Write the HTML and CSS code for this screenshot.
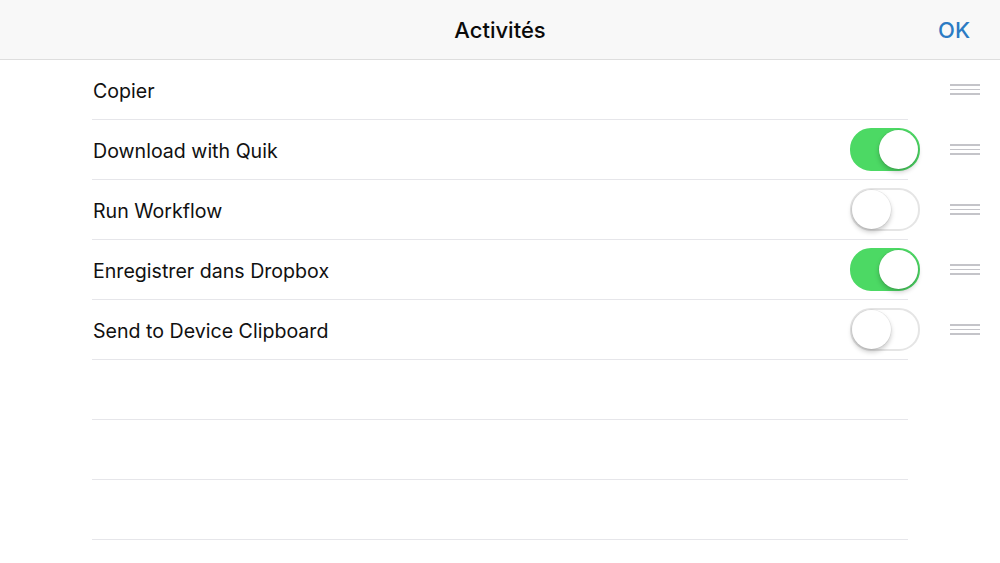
FILE: index.html
```html
<!DOCTYPE html>
<html lang="fr">
<head>
<meta charset="utf-8">
<title>Activités</title>
<link rel="stylesheet" href="styles.css">
</head>
<body>
<header class="navbar">
  <div class="nav-side"></div>
  <h1 class="nav-title">Activités</h1>
  <div class="nav-side nav-right"><button class="nav-btn">OK</button></div>
</header>
<ul class="list">
  <li class="row">
    <div class="cell"><span class="label">Copier</span></div>
    <span class="grip"><i></i><i></i><i></i></span>
  </li>
  <li class="row">
    <div class="cell"><span class="label">Download with Quik</span><span class="switch on"><span class="knob"></span></span></div>
    <span class="grip"><i></i><i></i><i></i></span>
  </li>
  <li class="row">
    <div class="cell"><span class="label">Run Workflow</span><span class="switch"><span class="knob"></span></span></div>
    <span class="grip"><i></i><i></i><i></i></span>
  </li>
  <li class="row">
    <div class="cell"><span class="label">Enregistrer dans Dropbox</span><span class="switch on"><span class="knob"></span></span></div>
    <span class="grip"><i></i><i></i><i></i></span>
  </li>
  <li class="row">
    <div class="cell"><span class="label">Send to Device Clipboard</span><span class="switch"><span class="knob"></span></span></div>
    <span class="grip"><i></i><i></i><i></i></span>
  </li>
  <li class="row empty"><div class="cell"></div></li>
  <li class="row empty"><div class="cell"></div></li>
  <li class="row empty"><div class="cell"></div></li>
</ul>
</body>
</html>
```
FILE: styles.css
```css
html, body {
  margin: 0;
  padding: 0;
  background: #ffffff;
  font-family: "Inter", "Liberation Sans", Arial, sans-serif;
  color: #000;
  height: 563px;
  overflow: hidden;
}

.navbar {
  height: 59px;
  background: #f8f8f8;
  border-bottom: 1px solid #dedede;
  display: flex;
  align-items: center;
  padding: 0 30px;
}

.nav-side {
  flex: 1;
  display: flex;
}

.nav-right {
  justify-content: flex-end;
}

.nav-title {
  margin: 0;
  font-size: 22px;
  font-weight: 500;
  color: #0a0a0a;
}

.nav-btn {
  border: 0;
  background: none;
  padding: 0;
  font-family: "Inter", "Liberation Sans", sans-serif;
  font-size: 22px;
  font-weight: 500;
  color: #2b7bc4;
  margin-top: 1px;
}

.list {
  list-style: none;
  margin: 0;
  padding: 0;
}

.row {
  display: flex;
  align-items: center;
  height: 60px;
  padding-left: 92px;
}

.cell {
  width: 816px;
  height: 59px;
  border-bottom: 1px solid #e6e6ea;
  display: flex;
  align-items: center;
  justify-content: space-between;
  box-sizing: content-box;
}

.label {
  font-size: 19.6px;
  padding-left: 1px;
  padding-top: 2px;
  color: #111;
}

.switch {
  width: 66px;
  height: 39px;
  border-radius: 21px;
  border: 2px solid #e5e5e5;
  background: #fff;
  position: relative;
  margin-right: -12px;
  margin-top: -1px;
  box-sizing: content-box;
}

.switch.on {
  background: #4cd964;
  border-color: #4cd964;
}

.knob {
  position: absolute;
  top: 0;
  left: 0;
  width: 39px;
  height: 39px;
  border-radius: 50%;
  background: #fff;
  box-shadow: 0 3px 5px rgba(0, 0, 0, 0.22), 0 0 0 0.5px rgba(0, 0, 0, 0.08);
}

.switch.on .knob {
  left: 27px;
}

.grip {
  margin-left: 42px;
  width: 30px;
  display: flex;
  flex-direction: column;
  gap: 3px;
  margin-top: -1px;
}

.grip i {
  display: block;
  height: 1.5px;
  background: #c4c4c9;
}
```
